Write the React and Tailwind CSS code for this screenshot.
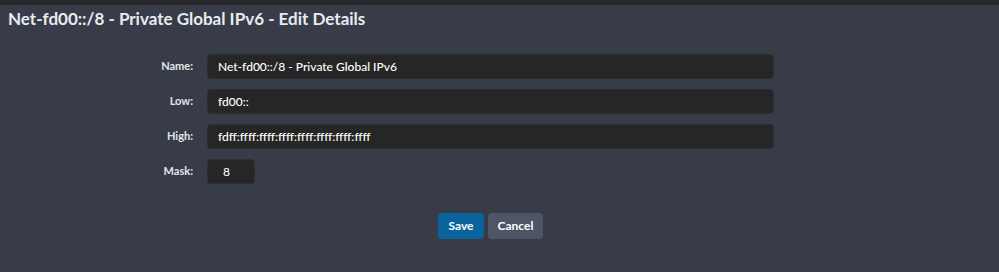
import React from "react";

const rows = [
  { label: "Name:", value: "Net-fd00::/8 - Private Global IPv6", w: "w-[567px] px-[10px]" },
  { label: "Low:", value: "fd00::", w: "w-[567px] px-[10px]" },
  { label: "High:", value: "fdff:ffff:ffff:ffff:ffff:ffff:ffff:ffff", w: "w-[567px] px-[10px]" },
  { label: "Mask:", value: "8", w: "w-[48px] pl-[15px]" },
];

export default function App() {
  return (
    <div
      className="w-[999px] h-[272px] bg-[#383c48] text-[#eceef2] overflow-hidden"
      style={{ fontFamily: "Lato, 'DejaVu Sans', sans-serif" }}
    >
      {/* top strip */}
      <div className="h-[5px] bg-[#27282c]" />

      <h1 className="pl-[8px] pt-[4px] text-[17px] leading-[20px] font-bold text-[#e8ebf0]">
        Net-fd00::/8 - Private Global IPv6 - Edit Details
      </h1>

      {/* Form */}
      <div className="mt-[25px] flex flex-col gap-[10px]">
        {rows.map((r) => (
          <div key={r.label} className="flex items-center">
            <label className="w-[193px] text-right text-[11px] font-bold text-[#e3e6ea]">
              {r.label}
            </label>
            <div
              className={`ml-[14px] h-[25px] ${r.w} flex items-center bg-[#262626] border border-[#2e2f31] rounded-[4px] text-[12px] font-medium text-white`}
            >
              {r.value}
            </div>
          </div>
        ))}
      </div>

      {/* Buttons */}
      <div className="mt-[29px] flex justify-center gap-[4px]">
        <button className="ml-[-18px] h-[26px] w-[46px] rounded-[4px] bg-[#0b639c] text-white text-[12px] font-bold">
          Save
        </button>
        <button className="h-[26px] w-[55px] rounded-[4px] bg-[#4e5566] text-white text-[12px] font-bold">
          Cancel
        </button>
      </div>
    </div>
  );
}
